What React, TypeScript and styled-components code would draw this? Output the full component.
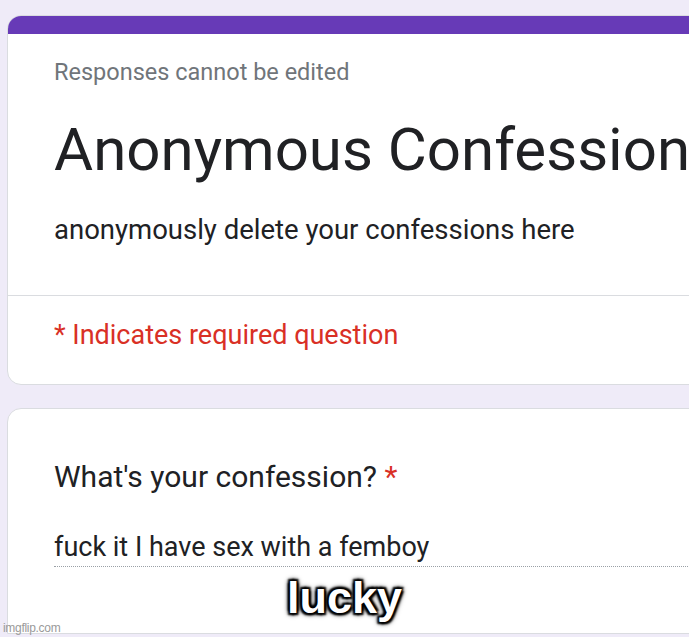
import React from "react";
import styled, { createGlobalStyle } from "styled-components";

const Global = createGlobalStyle`
  html, body { margin: 0; padding: 0; }
  body {
    background: #efebf8;
    width: 689px;
    height: 637px;
    overflow: hidden;
    font-family: Roboto, "Liberation Sans", sans-serif;
  }
`;

const Page = styled.div`
  position: relative;
  width: 689px;
  height: 637px;
  overflow: hidden;
  padding: 15px 0 0 7px;
  box-sizing: border-box;
  display: flex;
  flex-direction: column;
  gap: 23px;
`;

const Card = styled.div<{ $flatBottom?: boolean }>`
  width: 800px;
  background: #fff;
  border: 1px solid #dadce0;
  border-radius: ${(p) => (p.$flatBottom ? "14px 14px 0 0" : "14px")};
  overflow: hidden;
  flex-shrink: 0;
`;

const TopBar = styled.div`
  height: 18px;
  background: #673ab7;
`;

const Section = styled.div<{ $pt: number; $pb: number }>`
  padding: ${(p) => p.$pt}px 40px ${(p) => p.$pb}px 46px;
`;

const Divider = styled.div`
  height: 1px;
  background: #dadce0;
`;

const Note = styled.div`
  font-size: 23.5px;
  color: #70757a;
  line-height: 30px;
`;

const Title = styled.div`
  font-size: 60px;
  color: #202124;
  line-height: 72px;
  margin-top: 27px;
  white-space: nowrap;
`;

const Desc = styled.div`
  font-size: 27.5px;
  color: #202124;
  line-height: 34px;
  margin-top: 27px;
`;

const Required = styled.div`
  font-size: 27px;
  color: #d93025;
  line-height: 34px;
`;

const Question = styled.div`
  font-size: 30px;
  color: #202124;
  line-height: 38px;
`;

const Star = styled.span`
  color: #d93025;
`;

const Answer = styled.div`
  margin-top: 34px;
  font-size: 27px;
  color: #202124;
  line-height: 34px;
  padding-bottom: 2px;
  border-bottom: 1px dotted #9aa0a6;
`;

const Meme = styled.div`
  position: absolute;
  left: 0;
  right: 0;
  top: 570px;
  text-align: center;
  font-family: "Liberation Sans", Arial, sans-serif;
  font-weight: bold;
  font-size: 45px;
  color: #fff;
  line-height: 56px;
  text-shadow: -2px -2px 2px #000, 2px -2px 2px #000, -2px 2px 2px #000,
    2px 2px 2px #000, 0 0 5px #000, 0 0 6px #000;
`;

const Watermark = styled.div`
  position: absolute;
  left: 3px;
  bottom: 2px;
  font-family: "Liberation Sans", Arial, sans-serif;
  font-size: 12px;
  color: #9a9a9a;
  letter-spacing: -0.3px;
`;

export default function App() {
  return (
    <>
      <Global />
      <Page>
        <Card>
          <TopBar />
          <Section $pt={23} $pb={48}>
            <Note>Responses cannot be edited</Note>
            <Title>Anonymous Confession</Title>
            <Desc>anonymously delete your confessions here</Desc>
          </Section>
          <Divider />
          <Section $pt={22} $pb={32}>
            <Required>* Indicates required question</Required>
          </Section>
        </Card>
        <Card $flatBottom>
          <Section $pt={49} $pb={66}>
            <Question>
              What's your confession? <Star>*</Star>
            </Question>
            <Answer>fuck it I have sex with a femboy</Answer>
          </Section>
        </Card>
        <Meme>lucky</Meme>
        <Watermark>imgflip.com</Watermark>
      </Page>
    </>
  );
}
